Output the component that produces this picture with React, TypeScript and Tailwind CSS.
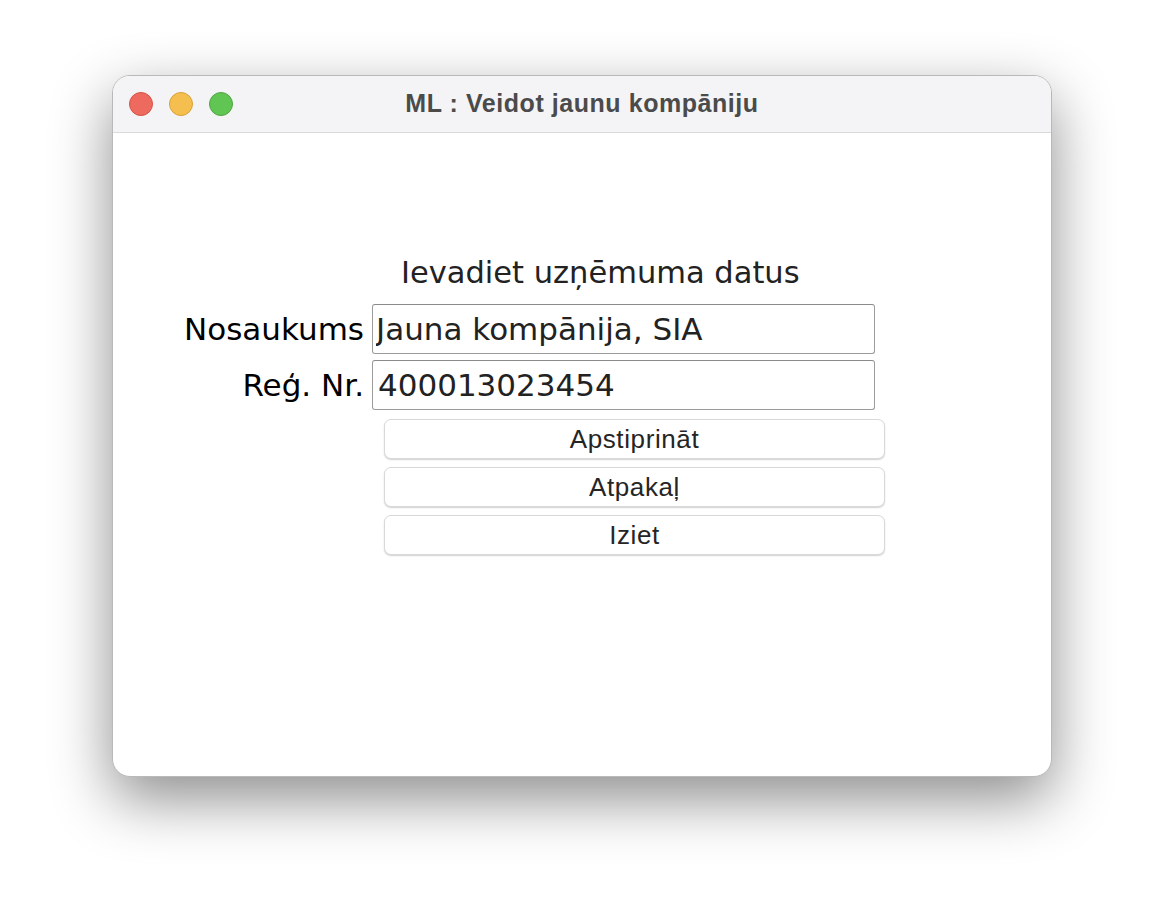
export default function App() {
  const tk = { fontFamily: '"DejaVu Sans", Verdana, sans-serif' };
  const btn = { fontFamily: '"Liberation Sans", Arial, sans-serif' };

  return (
    <div className="w-[1164px] h-[924px] bg-white pt-[75px] pl-[112px] overflow-hidden">
      {/* Logu rāmis */}
      <div className="w-[940px] h-[702px] bg-white rounded-[18px] overflow-hidden border border-[#b9b9b9] shadow-[0_22px_60px_rgba(0,0,0,0.45)] flex flex-col">
        {/* Virsraksta josla */}
        <div className="h-[57px] shrink-0 bg-[#f4f4f6] border-b border-[#dadada] flex items-center relative">
          <div className="flex items-center gap-4 pl-[16px]">
            <span className="w-6 h-6 rounded-full bg-[#ee6a5f] border border-[#d35246]"></span>
            <span className="w-6 h-6 rounded-full bg-[#f5bf4f] border border-[#d8a13a]"></span>
            <span className="w-6 h-6 rounded-full bg-[#61c554] border border-[#4ea73f]"></span>
          </div>
          <div
            className="absolute inset-0 flex items-center justify-center text-[25px] font-bold text-[#4b4b4b] tracking-[0.55px]"
            style={btn}
          >
            ML : Veidot jaunu kompāniju
          </div>
        </div>

        {/* Saturs */}
        <div className="flex-1 pt-[122px]" style={tk}>
          <div className="pl-[288px] text-[30.5px] leading-[36px] text-[#222]">Ievadiet uzņēmuma datus</div>

          <div className="mt-[13px] flex items-center">
            <div className="w-[251px] text-right text-[31px] leading-[50px] text-black">Nosaukums</div>
            <input
              readOnly
              value="Jauna kompānija, SIA"
              className="ml-[8px] w-[503px] h-[50px] border border-[#9c9c9c] border-t-[#8a8a8a] rounded-[3px] pl-[3px] text-[31px] text-[#222] outline-none bg-white"
              style={tk}
            />
          </div>

          <div className="mt-[6px] flex items-center">
            <div className="w-[251px] text-right text-[31px] leading-[50px] text-black">Reģ. Nr.</div>
            <input
              readOnly
              value="400013023454"
              className="ml-[8px] w-[503px] h-[50px] border border-[#9c9c9c] border-t-[#8a8a8a] rounded-[3px] pl-[5px] text-[31px] text-[#222] outline-none bg-white"
              style={tk}
            />
          </div>

          <div className="mt-[9px] ml-[271px] w-[501px] flex flex-col gap-[8px]" style={btn}>
            <button className="h-[40px] bg-white border border-[#d9d9d9] rounded-[7px] shadow-[0_1px_1.5px_rgba(0,0,0,0.18)] text-[26px] tracking-[0.6px] text-[#252525]">
              Apstiprināt
            </button>
            <button className="h-[40px] bg-white border border-[#d9d9d9] rounded-[7px] shadow-[0_1px_1.5px_rgba(0,0,0,0.18)] text-[26px] tracking-[0.6px] text-[#252525]">
              Atpakaļ
            </button>
            <button className="h-[40px] bg-white border border-[#d9d9d9] rounded-[7px] shadow-[0_1px_1.5px_rgba(0,0,0,0.18)] text-[26px] tracking-[0.6px] text-[#252525]">
              Iziet
            </button>
          </div>
        </div>
      </div>
    </div>
  );
}
